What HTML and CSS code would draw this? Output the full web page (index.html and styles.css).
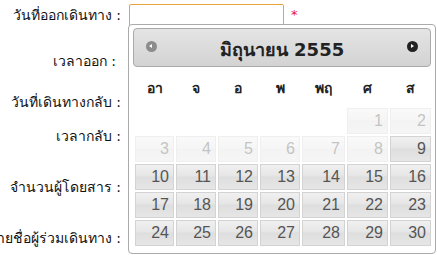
FILE: index.html
```html
<!DOCTYPE html>
<html lang="th">
<head>
  <meta charset="UTF-8" />
  <meta name="viewport" content="width=device-width, initial-scale=1.0"/>
  <title>จองตั๋ว</title>
  <link rel="stylesheet" href="styles.css">
</head>
<body>
  <div class="page">
    <form class="booking-form">
      <div class="form-row row-depart">
        <label class="form-label"><span>วันที่ออกเดินทาง :</span></label>
        <div class="form-field">
          <input type="text" class="date-input focused" />
          <span class="required">*</span>
        </div>
      </div>
      <div class="form-row row-time">
        <label class="form-label label-short"><span>เวลาออก :</span></label>
        <div class="form-field"></div>
      </div>
      <div class="form-row row-return">
        <label class="form-label"><span>วันที่เดินทางกลับ :</span></label>
        <div class="form-field"></div>
      </div>
      <div class="form-row row-time-back">
        <label class="form-label"><span>เวลากลับ :</span></label>
        <div class="form-field"></div>
      </div>
      <div class="form-row row-passengers">
        <label class="form-label"><span>จำนวนผู้โดยสาร :</span></label>
        <div class="form-field"></div>
      </div>
      <div class="form-row row-names">
        <label class="form-label"><span>รายชื่อผู้ร่วมเดินทาง :</span></label>
        <div class="form-field"></div>
      </div>
    </form>

    <div class="datepicker">
      <div class="dp-header">
        <span class="dp-nav dp-prev"></span>
        <span class="dp-title">มิถุนายน 2555</span>
        <span class="dp-nav dp-next"></span>
      </div>
      <div class="dp-weekdays">
        <span>อา</span><span>จ</span><span>อ</span><span>พ</span><span>พฤ</span><span>ศ</span><span>ส</span>
      </div>
      <div class="dp-days" id="dp-days"></div>
    </div>
  </div>

  <script>
    // มิถุนายน 2555 เริ่มวันศุกร์ วันที่ก่อน 9 เลือกไม่ได้
    const daysBox = document.getElementById("dp-days");
    const firstWeekday = 5;
    const daysInMonth = 30;
    const minDay = 9;

    for (let i = 0; i < firstWeekday; i++) {
      const empty = document.createElement("span");
      empty.className = "dp-empty";
      daysBox.appendChild(empty);
    }
    for (let d = 1; d <= daysInMonth; d++) {
      const cell = document.createElement("a");
      cell.className = d < minDay ? "dp-day disabled" : "dp-day";
      cell.textContent = d;
      daysBox.appendChild(cell);
    }
  </script>
</body>
</html>
```

FILE: styles.css
```css
body {
  margin: 0;
  font-family: Tahoma, "DejaVu Sans", "Noto Sans", sans-serif;
  background-color: #fff;
  color: #222;
}
.page {
  position: relative;
  width: 437px;
  height: 255px;
  overflow: hidden;
}
.booking-form {
  display: flex;
  flex-direction: column;
}
.form-row {
  display: flex;
  align-items: center;
}
.row-depart { height: 28px; margin-top: 1px; }
.row-time { height: 64px; }
.row-return { height: 18px; }
.row-time-back { height: 50px; }
.row-passengers { height: 52px; }
.row-names { height: 50px; }
.form-label {
  width: 121px;
  flex-shrink: 0;
  display: flex;
  justify-content: flex-end;
  white-space: nowrap;
  font-size: 14px;
  color: #111;
}
.label-short {
  padding-right: 5px;
  box-sizing: border-box;
}
.form-field {
  display: flex;
  align-items: center;
  margin-left: 8px;
}
.date-input {
  width: 155px;
  height: 23px;
  box-sizing: border-box;
  border: 1px solid #e8a33d;
  border-radius: 2px;
  padding: 2px 4px;
  margin: 0;
  outline: none;
}
.required {
  color: #e8163c;
  margin-left: 7px;
  font-size: 13px;
  margin-top: -2px;
}

/* popup calendar */
.datepicker {
  position: absolute;
  left: 128px;
  top: 24px;
  width: 308px;
  height: 230px;
  box-sizing: border-box;
  padding: 3px 4px;
  background-color: #fff;
  border: 1px solid #aaa;
  border-radius: 4px;
}
.dp-header {
  position: relative;
  height: 39px;
  box-sizing: border-box;
  border: 1px solid #aaa;
  border-radius: 4px;
  background: linear-gradient(#e4e4e4, #d3d3d3);
  display: flex;
  align-items: center;
  justify-content: center;
  padding-top: 3px;
}
.dp-title {
  font-size: 18px;
  font-weight: bold;
  color: #222;
}
.dp-nav {
  position: absolute;
  top: 12px;
  width: 11px;
  height: 11px;
  border-radius: 50%;
}
.dp-nav::after {
  content: "";
  position: absolute;
  top: 3px;
  border-top: 2.5px solid transparent;
  border-bottom: 2.5px solid transparent;
}
.dp-prev {
  left: 12px;
  background-color: #8c8c8c;
}
.dp-prev::after {
  left: 3px;
  border-right: 3px solid #fff;
}
.dp-next {
  right: 12px;
  background-color: #222;
}
.dp-next::after {
  left: 4px;
  border-left: 3px solid #fff;
}
.dp-weekdays {
  display: grid;
  grid-template-columns: 39px 40px 40px 40px 43px 41px 41px;
  column-gap: 2px;
  margin-left: 2px;
  height: 41px;
  align-items: center;
  font-size: 14px;
  font-weight: bold;
  text-align: center;
  color: #222;
}
.dp-days {
  display: grid;
  grid-template-columns: 39px 40px 40px 40px 43px 41px 41px;
  grid-auto-rows: 26px;
  gap: 2px;
  margin-left: 2px;
}
.dp-day {
  box-sizing: border-box;
  border: 1px solid #d3d3d3;
  background: linear-gradient(#f0f0f0, #e6e6e6 45%, #dedede 50%, #e6e6e6);
  color: #555;
  font-size: 16px;
  font-family: "Liberation Sans", Tahoma, sans-serif;
  text-align: right;
  padding-right: 4px;
  line-height: 24px;
  text-decoration: none;
}
.dp-day.disabled {
  opacity: 0.35;
}
```
